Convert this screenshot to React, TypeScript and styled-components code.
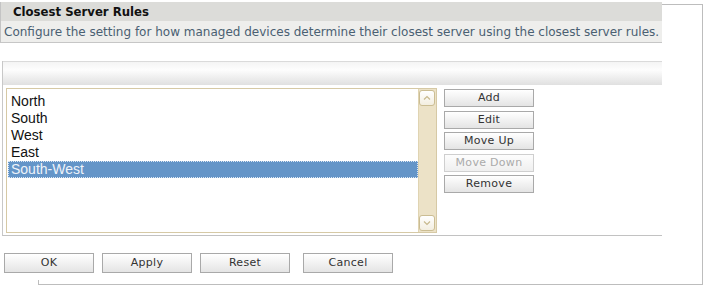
import React from "react";
import styled, { createGlobalStyle } from "styled-components";

const GlobalStyle = createGlobalStyle`
  html, body {
    margin: 0;
    padding: 0;
    background: #fff;
  }
  body {
    font-family: "DejaVu Sans", Verdana, sans-serif;
  }
`;

const Page = styled.div`
  position: relative;
  width: 707px;
  height: 287px;
  overflow: hidden;
`;

/* grey frame that peeks out behind the dialog */
const BackFrame = styled.div`
  position: absolute;
  left: 38px;
  top: 4px;
  width: 665px;
  height: 281px;
  border: 1px solid #bdbdbd;
  box-sizing: border-box;
  z-index: 0;
`;

const Dialog = styled.div`
  position: relative;
  z-index: 1;
  width: 662px;
  height: 280px;
  padding-top: 2px;
  background: #fff;
  box-sizing: border-box;
`;

const TitleBar = styled.div`
  height: 19px;
  background: #dcdcd9;
  border-left: 1px solid #c4c4c4;
  padding-left: 12px;
  display: flex;
  align-items: center;
  font-family: "DejaVu Sans Condensed", "DejaVu Sans", sans-serif;
  font-weight: bold;
  font-size: 13px;
  color: #111;
`;

const Description = styled.div`
  height: 21px;
  background: #eeeeec;
  border-left: 1px solid #c4c4c4;
  border-bottom: 1px solid #c6c6c6;
  padding-left: 3px;
  display: flex;
  align-items: center;
  font-size: 12px;
  color: #4a6072;
  white-space: nowrap;
  overflow: hidden;
`;

const Panel = styled.div`
  margin-top: 18px;
  margin-left: 2px;
  border-left: 1px solid #c8c8c8;
  border-bottom: 1px solid #c2c2c2;
`;

const PanelHeader = styled.div`
  height: 23px;
  border-top: 1px solid #dadada;
  background: linear-gradient(#f4f4f4, #fdfdfd 35%, #e0e0e0);
`;

const PanelBody = styled.div`
  display: flex;
  gap: 7px;
  padding: 3px 0 2px 3px;
`;

const ListBox = styled.div`
  width: 431px;
  height: 145px;
  border: 1px solid #d6c9a5;
  box-sizing: border-box;
  display: flex;
  background: #fff;
`;

const Options = styled.div`
  flex: 1;
  padding: 4px 0 0 1px;
`;

const Option = styled.div<{ $selected?: boolean }>`
  height: 17px;
  line-height: 17px;
  padding-left: 3px;
  font-family: "Liberation Sans", Arial, sans-serif;
  font-size: 14px;
  color: ${(p) => (p.$selected ? "#eef3fa" : "#111")};
  background: ${(p) => (p.$selected ? "#6495c8" : "transparent")};
  outline: ${(p) => (p.$selected ? "1px dotted #dde8f4" : "none")};
  outline-offset: -1px;
`;

const ScrollBar = styled.div`
  width: 18px;
  background: #ece2c7;
  border-left: 1px solid #e0d4b2;
  display: flex;
  flex-direction: column;
  justify-content: space-between;
  padding: 1px 0;
  box-sizing: border-box;
`;

const ScrollArrow = styled.div`
  width: 16px;
  height: 16px;
  border: 1px solid #cbbd93;
  border-radius: 3px;
  background: linear-gradient(#ffffff, #f3eee0);
  box-sizing: border-box;
  display: flex;
  align-items: center;
  justify-content: center;
`;

const SideButtons = styled.div`
  display: flex;
  flex-direction: column;
  gap: 3.5px;
  padding-top: 1px;
`;

const Button = styled.button<{ $width?: number }>`
  width: ${(p) => p.$width ?? 90}px;
  height: 18px;
  padding: 0;
  border: 1px solid #a9a9a9;
  background: linear-gradient(#ffffff, #e4e4e4);
  font-family: "DejaVu Sans", Verdana, sans-serif;
  font-size: 11px;
  letter-spacing: 0.3px;
  color: #333;
  box-sizing: border-box;
  line-height: 16px;
  &:disabled {
    color: #aaa;
    border-color: #cfcfcf;
    background: linear-gradient(#fdfdfd, #efefef);
  }
`;

const FooterButtons = styled.div`
  display: flex;
  margin-top: 17px;
  padding-left: 4px;
  gap: 8px;

  & > button {
    height: 20px;
  }
  & > button:last-child {
    margin-left: 5px;
  }
`;

const items = ["North", "South", "West", "East", "South-West"];

function Chevron({ up }: { up?: boolean }) {
  return (
    <svg width="8" height="6" viewBox="0 0 8 6">
      <path
        d={up ? "M1 4.5 L4 1.5 L7 4.5" : "M1 1.5 L4 4.5 L7 1.5"}
        fill="none"
        stroke="#c8b98e"
        strokeWidth="1.2"
      />
    </svg>
  );
}

export default function App() {
  return (
    <Page>
      <GlobalStyle />
      <BackFrame />
      <Dialog>
        <TitleBar>Closest Server Rules</TitleBar>
        <Description>
          Configure the setting for how managed devices determine their closest server using the closest server rules.
        </Description>
        <Panel>
          <PanelHeader />
          <PanelBody>
            <ListBox>
              <Options>
                {items.map((it) => (
                  <Option key={it} $selected={it === "South-West"}>
                    {it}
                  </Option>
                ))}
              </Options>
              <ScrollBar>
                <ScrollArrow>
                  <Chevron up />
                </ScrollArrow>
                <ScrollArrow>
                  <Chevron />
                </ScrollArrow>
              </ScrollBar>
            </ListBox>
            <SideButtons>
              <Button>Add</Button>
              <Button>Edit</Button>
              <Button>Move Up</Button>
              <Button disabled>Move Down</Button>
              <Button>Remove</Button>
            </SideButtons>
          </PanelBody>
        </Panel>
        <FooterButtons>
          <Button>OK</Button>
          <Button>Apply</Button>
          <Button>Reset</Button>
          <Button>Cancel</Button>
        </FooterButtons>
      </Dialog>
    </Page>
  );
}
